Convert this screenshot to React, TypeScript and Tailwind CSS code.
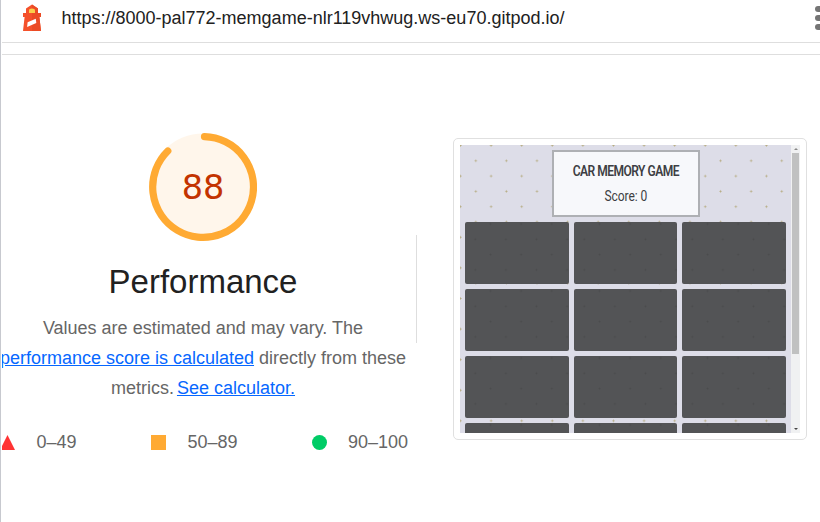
import React from "react";

const cards = Array.from({ length: 12 }, (_, i) => i);

function LighthouseLogo() {
  return (
    <svg className="h-7 w-5 shrink-0" viewBox="0 0 20 28">
      <path d="M4 4.4 10 .4l6 4V9H4Z" fill="#f4512b" />
      <path d="M1 9h18v4h-1.6L19 27H1l1.6-14H1Z" fill="#f4512b" />
      <path d="M10 .4 16 4.4V9h3v4h-1.6L19 27h-9Z" fill="#eb4b25" />
      <path d="M7 9V6.4C7 5.4 8.4 4.6 10 4.6s3 .8 3 1.8V9Z" fill="#fbd04b" />
      <path d="m5.6 18.2 8.2-3.4.5 4.2-9.2 4Z" fill="#fff" />
    </svg>
  );
}

function Gauge() {
  return (
    <div className="relative size-[108px]">
      <svg className="size-full" viewBox="0 0 108 108">
        <circle cx="54" cy="54" r="53.5" fill="#fff6eb" />
        <path d="M55.5 3.6A50.4 50.4 0 1 1 18.8 18" fill="none" stroke="#fa3" strokeWidth="7.2" strokeLinecap="round" />
      </svg>
      <div className="absolute inset-0 flex items-center justify-center pt-[3px] font-['DejaVu_Sans',sans-serif] text-[33.5px] text-[#c33300]">
        88
      </div>
    </div>
  );
}

function GamePreview() {
  return (
    <div className="mt-[83px] ml-9 flex h-[302px] w-[354px] shrink-0 rounded-[5px] border border-[#e0e0e0] p-1.5">
      <div className="flex h-[288px] w-[340px] overflow-hidden">
        <div className="w-[331px] bg-[#dddde8] bg-[radial-gradient(circle,#b5ab80_0.8px,transparent_1.2px),radial-gradient(circle,#b5ab80_0.8px,transparent_1.2px)] bg-[size:30.6px_30.6px] bg-[position:-14.8px_-14.8px,0.5px_0.5px] pt-[5px] pl-[5px]">
          <div className="ml-[87px] flex h-[67px] w-[148px] flex-col items-center border-2 border-[#aeb0b4] bg-[#f7f8fb] pt-[9px] font-['Roboto',sans-serif] text-[#3d3e43]">
            <div className="scale-x-[0.86] text-[14px] leading-5 font-semibold whitespace-nowrap tracking-[-0.6px]">CAR MEMORY GAME</div>
            <div className="mt-[5px] scale-x-[0.86] text-[14px] leading-5 tracking-[-0.1px]">Score: 0</div>
          </div>
          <div className="mt-[4.6px] grid w-[321px] grid-cols-3 gap-x-[5px] gap-y-[5px]">
            {cards.map((card) => (
              <div
                key={card}
                className="h-[62px] rounded-[2px] bg-[#535456] bg-[radial-gradient(circle,#4a4b4c_0.7px,transparent_1.2px),radial-gradient(circle,#4a4b4c_0.7px,transparent_1.2px)] bg-[size:30.6px_30.6px] bg-[position:-5px_2px,10.3px_17.3px]"
              />
            ))}
          </div>
        </div>
        <div className="flex w-[9px] flex-col items-center bg-[#f0f1f2]">
          <div className="flex h-2 items-center">
            <div className="border-x-2 border-b-2 border-x-transparent border-b-[#888]" />
          </div>
          <div className="h-[201px] w-[7px] bg-[#c0c1c1]" />
          <div className="mt-auto flex h-[9px] items-center">
            <div className="border-x-2 border-t-2 border-x-transparent border-t-[#444]" />
          </div>
        </div>
      </div>
    </div>
  );
}

export default function App() {
  return (
    <div className="h-[522px] w-[820px] overflow-hidden border-l border-[#c7c9cf] bg-white pl-px font-['Liberation_Sans',Arial,sans-serif]">
      <header className="flex h-[43px] border-b border-[#dedede] pt-1 pl-5">
        <LighthouseLogo />
        <div className="ml-[19.5px] pt-0.5 text-[18px] leading-6 whitespace-nowrap text-[#212121]">
          https://8000-pal772-memgame-nlr119vhwug.ws-eu70.gitpod.io/
        </div>
        <div className="mt-[2px] -mr-1 ml-auto flex shrink-0 flex-col gap-[3px]">
          <i className="h-1.5 w-[9px] rounded-full bg-[#757575]" />
          <i className="h-1.5 w-[9px] rounded-full bg-[#757575]" />
          <i className="h-1.5 w-[9px] rounded-full bg-[#757575]" />
        </div>
      </header>
      <div className="h-3 border-b border-[#dedede]" />
      <main className="flex h-[467px]">
        <section className="flex w-[414px] shrink-0 flex-col overflow-hidden pt-[78px]">
          <div className="flex w-[402px] flex-col items-center">
            <Gauge />
            <h1 className="mt-[21px] text-[33px] leading-[40px] text-[#212121]">Performance</h1>
            <div className="mt-[11px] flex flex-col items-center text-[18px] leading-[30px] whitespace-nowrap text-[#666]">
              <p>Values are estimated and may vary. The</p>
              <p>
                <a className="text-[#0667ff] underline">performance score is calculated</a> directly from these
              </p>
              <p>
                metrics.<a className="ml-[3px] text-[#0667ff] underline">See calculator.</a>
              </p>
            </div>
          </div>
          <div className="mt-[29px] flex h-5 items-center text-[18px] leading-5 text-[#666]">
            <div className="flex w-[149px] items-center">
              <svg className="-ml-0.5 h-[15px] w-[15px]" viewBox="0 0 15 15">
                <path d="m7.5 0 7.5 15H0Z" fill="#f33" />
              </svg>
              <span className="ml-[21.5px]">0–49</span>
            </div>
            <div className="flex w-[161px] items-center">
              <i className="size-[15px] bg-[#fa3]" />
              <span className="ml-[21.5px]">50–89</span>
            </div>
            <div className="flex items-center">
              <i className="size-[15px] rounded-full bg-[#0c6]" />
              <span className="ml-[21px]">90–100</span>
            </div>
          </div>
        </section>
        <div className="mt-[180px] h-[108px] w-px shrink-0 bg-[#dedede]" />
        <GamePreview />
      </main>
    </div>
  );
}
